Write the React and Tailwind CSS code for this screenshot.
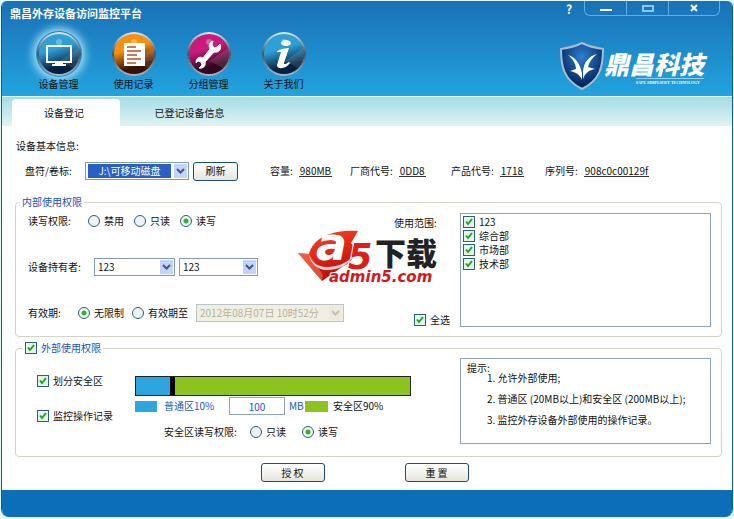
import { useState } from "react";

const NAV = [
  { name: "设备管理", icon: "monitor", from: "#2f9fd8", to: "#06203f" },
  { name: "使用记录", icon: "doc", from: "#f79010", to: "#3a1002" },
  { name: "分组管理", icon: "wrench", from: "#c81b7c", to: "#35051f" },
  { name: "关于我们", icon: "info", from: "#2f9fd8", to: "#06203f" },
];

const DEPARTMENTS = ["123", "综合部", "市场部", "技术部"];

const TIPS = [
  "1. 允许外部使用;",
  "2. 普通区 (20MB以上)和安全区 (200MB以上);",
  "3. 监控外存设备外部使用的操作记录。",
];

function NavIcon({ icon, from, to, active }) {
  return (
    <svg
      viewBox="0 0 46 46"
      className={active ? "h-[46px] w-[46px] rounded-full shadow-[0_0_9px_3px_#a8e2fb]" : "h-[46px] w-[46px]"}
    >
      <defs>
        <linearGradient id={`ball-${icon}`} x1="0" y1="0" x2="0.3" y2="1">
          <stop offset="0.1" stopColor={from} />
          <stop offset="0.45" stopColor={from} />
          <stop offset="0.9" stopColor={to} />
        </linearGradient>
        <linearGradient id={`ring-${icon}`} x1="0" y1="0" x2="0" y2="1">
          <stop offset="0" stopColor="#e2eaee" />
          <stop offset="0.5" stopColor="#3f5666" />
          <stop offset="1" stopColor="#a9b8c2" />
        </linearGradient>
      </defs>
      <circle cx="23" cy="23" r="22" fill={`url(#ring-${icon})`} />
      <circle cx="23" cy="23" r="20" fill={`url(#ball-${icon})`} />
      <path d="M24 30 42 17a20 20 0 0 1-5 20Z" fill="#fff" opacity="0.12" />
      <circle cx="23" cy="11" r="3" fill="#fff" opacity="0.3" />
      {icon === "monitor" && (
        <g>
          <rect x="11" y="15" width="24" height="16" fill="none" stroke="#fff" strokeWidth="2" />
          <path d="M19 32h8v1h3v2H16v-2h3Z" fill="#fff" />
        </g>
      )}
      {icon === "doc" && (
        <g>
          <rect x="13" y="12" width="21" height="23" fill="#fff" />
          <path d="M16 16h9M16 20h14M16 24h10M16 28h14M16 32h9" stroke="#b8511c" strokeWidth="1.5" />
        </g>
      )}
      {icon === "wrench" && (
        <path
          d="M27 10 26 14 28 17 31 16 34 13 C36 18 33 22 28 21 L19 31 C20 35 17 38 13 37 L16 34 15 31 12 30 10 32 C10 27 13 25 17 27 L24 18 C22 14 24 11 27 10Z"
          fill="#fff"
          stroke="#fff"
          strokeWidth="1"
        />
      )}
      {icon === "info" && (
        <g fill="#fff">
          <ellipse cx="25" cy="12" rx="5" ry="3" />
          <path d="M16 20c4-2 8-3 12-3l-5 15c0 2 2 1 5-1l1 1c-4 6-13 7-13 2l4-13h-4Z" />
        </g>
      )}
    </svg>
  );
}

function CheckBox({ label, className = "", checked = true }) {
  return (
    <label className={`flex items-center gap-1 ${className}`}>
      <span className="grid h-3 w-3 shrink-0">
        <input
          type="checkbox"
          defaultChecked={checked}
          className="peer col-start-1 row-start-1 h-3 w-3 appearance-none border border-[#2c5f7c] bg-[#e6f5ea]"
        />
        <svg
          viewBox="0 0 12 12"
          className="pointer-events-none invisible col-start-1 row-start-1 h-3 w-3 peer-checked:visible"
        >
          <path d="M3 5.5 5 8l4-5" fill="none" stroke="#21a121" strokeWidth="2" />
        </svg>
      </span>
      {label}
    </label>
  );
}

function Radio({ name, label, checked = false }) {
  return (
    <label className="flex items-center gap-1 whitespace-nowrap">
      <input
        type="radio"
        name={name}
        defaultChecked={checked}
        className="h-3 w-3 shrink-0 appearance-none rounded-full border border-[#2c5f7c] bg-[#eef4f6] checked:bg-[radial-gradient(circle,#2fae3a_2px,#f0faf0_3px)]"
      />
      {label}
    </label>
  );
}

function ComboBox({ label, options, className = "", textClass = "", disabled = false }) {
  return (
    <div
      className={`flex h-[18px] border p-px ${
        disabled ? "border-[#b9c4ca] bg-[#f1efe2]" : "border-[#7f9db9] bg-white"
      } ${className}`}
    >
      <div className="relative flex flex-1">
        <select
          aria-label={label}
          disabled={disabled}
          className={`h-full w-full appearance-none pr-4 leading-[14px] outline-none ${textClass}`}
        >
          {options.map((o) => (
            <option key={o}>{o}</option>
          ))}
        </select>
        <span
          className={`pointer-events-none absolute inset-y-0 right-0 flex w-[13px] items-center justify-center ${
            disabled ? "bg-[#eceadb] text-[#c2c0ae]" : "bg-[#c3d3fb] text-[#42587f]"
          }`}
        >
          <svg viewBox="0 0 9 6" className="h-[6px] w-[9px]">
            <path d="M1 1l3.500 3.500L8 1" fill="none" stroke="currentColor" strokeWidth="2" />
          </svg>
        </span>
      </div>
    </div>
  );
}

function Info({ label, value, className = "" }) {
  return (
    <div className={`flex items-center gap-[6px] ${className}`}>
      <dt>{label}:</dt>
      <dd className="border-b border-[#333] px-px leading-[10px]">{value}</dd>
    </div>
  );
}

function PushButton({ children, className = "" }) {
  return (
    <button
      type="button"
      className={`h-[19px] rounded-[3px] border border-[#1c4f74] bg-linear-to-b from-white to-[#e6e5dd] leading-none ${className}`}
    >
      {children}
    </button>
  );
}

function Brand() {
  return (
    <div className="flex items-start text-white">
      <svg viewBox="0 0 44 48" className="h-12 w-11">
        <defs>
          <radialGradient id="shield" cx="0.5" cy="0.3" r="0.6">
            <stop offset="0" stopColor="#2c7fd0" />
            <stop offset="1" stopColor="#06265f" />
          </radialGradient>
        </defs>
        <path
          d="M22 1C16 4 8 6 1 7c0 18 3 31 21 40C40 38 43 25 43 7 36 6 28 4 22 1Z"
          fill="url(#shield)"
          stroke="#a9bccb"
          strokeWidth="2"
        />
        <path d="M8 13c7 2 12 8 14 18v7c-2-5-6-8-12-9l6-2c0-5-3-10-8-14Z" fill="#fff" />
        <path d="M37 12c-8 2-13 8-14 17v8c2-6 6-9 12-10l-7-2c1-5 4-9 9-13Z" fill="#fff" />
      </svg>
      <div className="flex flex-col items-end pt-[7px]">
        <span className="text-[25px] leading-[29px] font-black italic">鼎昌科技</span>
        <span className="border-t border-[#8fd0f0] pt-px pr-1 font-['Liberation_Serif',serif] text-[4px] leading-[5px] font-bold">
          SAFE SIMPLSOFT TECHNOLOGY
        </span>
      </div>
    </div>
  );
}

function Watermark() {
  return (
    <svg
      viewBox="0 0 142 56"
      className="pointer-events-none absolute top-[20px] left-[282px] h-[56px] w-[142px] overflow-visible"
    >
      <defs>
        <linearGradient id="mark" x1="0" y1="0" x2="0.4" y2="1">
          <stop offset="0" stopColor="#f2502c" />
          <stop offset="0.5" stopColor="#e32a18" />
          <stop offset="1" stopColor="#b80d0d" />
        </linearGradient>
      </defs>
      <path d="M0 24l11 1C15 10 32 0 60 2l-7 12c8 8 2 19-9 24L24 52Z" fill="url(#mark)" />
      <path d="M0 24l11 1 14 21-1 6Z" fill="#f58a6c" opacity="0.5" />
      <path d="M11 25c2 8 8 13 18 13 10 0 20-4 26-11-5 9-14 14-26 14-10 0-17-7-18-16Z" fill="#fff" opacity="0.8" />
      <g fontWeight="700" fontFamily="DejaVu Sans, sans-serif">
        <text x="18" y="31" fontSize="46" fontStyle="italic" fill="#fff">a</text>
        <text x="50" y="40" fontSize="35" fontStyle="italic" fill="#dc1f17" stroke="#fff" strokeWidth="2" paintOrder="stroke">5</text>
        <text x="31" y="53" fontSize="15" fontStyle="italic" fill="#d3181b" stroke="#fff" strokeWidth="2" paintOrder="stroke">admin5.com</text>
      </g>
      <text x="77" y="36" fontSize="31" fontWeight="900" fill="#222" fontFamily="Noto Sans CJK SC, sans-serif">下载</text>
    </svg>
  );
}

function App() {
  const [page, setPage] = useState("设备管理");
  const [tab, setTab] = useState("设备登记");

  return (
    <div className="bg-[#dffaf6] p-px font-['Noto_Sans_CJK_SC',sans-serif] text-[10px] leading-[14px] text-[#111]">
      <div className="overflow-hidden rounded-t-md rounded-b-lg border-x border-[#0f5c93] bg-white">
        <header className="flex h-[95px] justify-between bg-linear-to-b from-[#1a70b5] to-[#22a4df] pl-2">
          <div>
            <h1 className="pt-1 text-[11px] leading-4 font-bold text-white">鼎昌外存设备访问监控平台</h1>
            <nav className="flex pt-[10px] pl-[11px]">
              {NAV.map((item) => (
                <button
                  key={item.name}
                  type="button"
                  onClick={() => setPage(item.name)}
                  className="flex w-[75px] flex-col items-center"
                >
                  <NavIcon {...item} active={page === item.name} />
                  <span>{item.name}</span>
                </button>
              ))}
            </nav>
          </div>
          <div className="flex flex-col items-end pr-3">
            <div className="flex h-[15px] items-stretch text-white">
              <button type="button" aria-label="帮助" className="w-[30px] text-[12px] font-bold">
                ?
              </button>
              <div className="flex divide-x divide-[#5fb2e0] rounded-b-md border border-t-0 border-[#5fb2e0]">
                <button type="button" aria-label="最小化" className="flex w-[42px] items-center justify-center">
                  <svg viewBox="0 0 12 8" className="h-2 w-3"><path d="M0 6h12" stroke="#fff" strokeWidth="2" /></svg>
                </button>
                <button type="button" aria-label="最大化" className="flex w-[42px] items-center justify-center">
                  <svg viewBox="0 0 12 8" className="h-2 w-3">
                    <rect x="1" y="2" width="10" height="5" fill="none" stroke="#8cc6ea" strokeWidth="2" />
                  </svg>
                </button>
                <button type="button" aria-label="关闭" className="flex w-[50px] items-center justify-center">
                  <svg viewBox="0 0 8 8" className="h-2 w-2"><path d="M1 1l6 6M7 1 1 7" stroke="#fff" strokeWidth="2" /></svg>
                </button>
              </div>
            </div>
            <div className="pt-[26px] pr-4">
              <Brand />
            </div>
          </div>
        </header>

        <div className="flex h-[30px] items-end border-t border-[#dff6fb] bg-linear-to-b from-[#a5dce6] to-[#e0f3f3] pl-[10px]">
          {["设备登记", "已登记设备信息"].map((t) => (
            <button
              key={t}
              type="button"
              onClick={() => setTab(t)}
              className={`h-[27px] ${t === tab ? "w-[108px] rounded-t-sm bg-white pr-1" : "w-[139px]"}`}
            >
              {t}
            </button>
          ))}
        </div>

        <main className="pt-3 pr-[10px] pb-2 pl-[13px]">
          <h2 className="h-4 pl-px leading-4">设备基本信息:</h2>
          <div className="mt-2 flex h-[18px] items-center pl-[10px]">
            <span className="w-[60px]">盘符/卷标:</span>
            <ComboBox
              label="盘符/卷标"
              options={["J:\\可移动磁盘"]}
              className="w-[104px]"
              textClass="bg-[#2a5fc4] bg-clip-content pl-px text-center text-white"
            />
            <PushButton className="ml-1 w-[45px]">刷新</PushButton>
            <dl className="ml-8 flex items-center">
              <Info label="容量" value="980MB" className="w-[80px]" />
              <Info label="厂商代号" value="0DD8" className="w-[101px]" />
              <Info label="产品代号" value="1718" className="w-[94px]" />
              <Info label="序列号" value="908c0c00129f" />
            </dl>
          </div>

          <fieldset className="mt-[15px] rounded-[4px] border border-[#d3d3c6] pr-[10px] pb-[9px]">
            <legend className="ml-1 px-0.5 text-[#1c4fc4]">内部使用权限</legend>
            <div className="relative flex">
              <div className="flex w-[378px] shrink-0 flex-col gap-[26px] pt-0.5 pl-3">
                <div className="flex h-5 items-center gap-[10px]">
                  <span className="w-[50px]">读写权限:</span>
                  <Radio name="inner" label="禁用" />
                  <Radio name="inner" label="只读" />
                  <Radio name="inner" label="读写" checked />
                </div>
                <div className="flex h-5 items-center">
                  <span className="w-[66px]">设备持有者:</span>
                  <ComboBox label="部门" options={["123"]} className="w-[81px]" textClass="pl-0.5" />
                  <ComboBox label="持有者" options={["123"]} className="ml-1 w-[79px]" textClass="pl-0.5" />
                </div>
                <div className="flex h-5 items-center gap-2">
                  <span className="w-[42px]">有效期:</span>
                  <Radio name="valid" label="无限制" checked />
                  <Radio name="valid" label="有效期至" />
                  <ComboBox
                    label="有效期至日期"
                    options={["2012年08月07日 10时52分"]}
                    className="w-[148px]"
                    textClass="pl-0.5 text-[#b5b29c] opacity-100"
                    disabled
                  />
                </div>
              </div>
              <div className="flex w-[66px] shrink-0 flex-col justify-between pt-[7px]">
                <span>使用范围:</span>
                <CheckBox label="全选" className="pl-5" />
              </div>
              <ul className="mt-1 h-[114px] flex-1 border border-[#8fa5b5] pt-px pl-0.5">
                {DEPARTMENTS.map((d) => (
                  <li key={d}>
                    <CheckBox label={d} />
                  </li>
                ))}
              </ul>
              <Watermark />
            </div>
          </fieldset>

          <fieldset className="mt-1 rounded-[4px] border border-[#d3d3c6] pr-[10px] pb-3">
            <legend className="ml-[7px] px-0.5 text-[#1c4fc4]">
              <CheckBox label="外部使用权限" />
            </legend>
            <div className="flex pt-[3px]">
              <div className="flex w-[119px] shrink-0 flex-col gap-[21px] pt-4 pl-[21px]">
                <CheckBox label="划分安全区" />
                <CheckBox label="监控操作记录" />
              </div>
              <div className="w-[325px] shrink-0 pt-[18px]">
                <div className="flex h-5 w-[276px] border border-[#222]">
                  <div className="w-[34px] bg-[#2da5df]" />
                  <div className="w-[5px] bg-black" />
                  <div className="flex-1 bg-[#8dc31f]" />
                </div>
                <div className="flex h-5 items-center text-[#2456cc]">
                  <span className="h-[11px] w-[22px] bg-[#2da5df]" />
                  <label htmlFor="normal-size" className="w-[72px] pl-[7px]">普通区10%</label>
                  <input
                    id="normal-size"
                    defaultValue="100"
                    className="h-[18px] w-[56px] border border-[#8fa5c5] bg-white text-center outline-none"
                  />
                  <span className="w-5 pl-1">MB</span>
                  <span className="h-[11px] w-[23px] bg-[#8dc31f]" />
                  <span className="pl-[5px] text-[#111]">安全区90%</span>
                </div>
                <div className="mt-[6px] flex h-5 items-center gap-4 pl-[29px]">
                  <span className="w-[70px] whitespace-nowrap">安全区读写权限:</span>
                  <Radio name="outer" label="只读" />
                  <Radio name="outer" label="读写" checked />
                </div>
              </div>
              <div className="h-[86px] flex-1 border border-[#8fa5b5] pt-0.5 pl-[6px]">
                <p>提示:</p>
                <ol className="-mt-2 pl-5 leading-[21px] whitespace-nowrap">
                  {TIPS.map((t) => (
                    <li key={t}>{t}</li>
                  ))}
                </ol>
              </div>
            </div>
          </fieldset>

          <div className="mt-[6px] flex justify-center gap-20 pr-2">
            <PushButton className="w-16">授 权</PushButton>
            <PushButton className="w-16">重 置</PushButton>
          </div>
        </main>

        <footer className="h-[27px] bg-[#0c6db8]" />
      </div>
    </div>
  );
}

export default App;
